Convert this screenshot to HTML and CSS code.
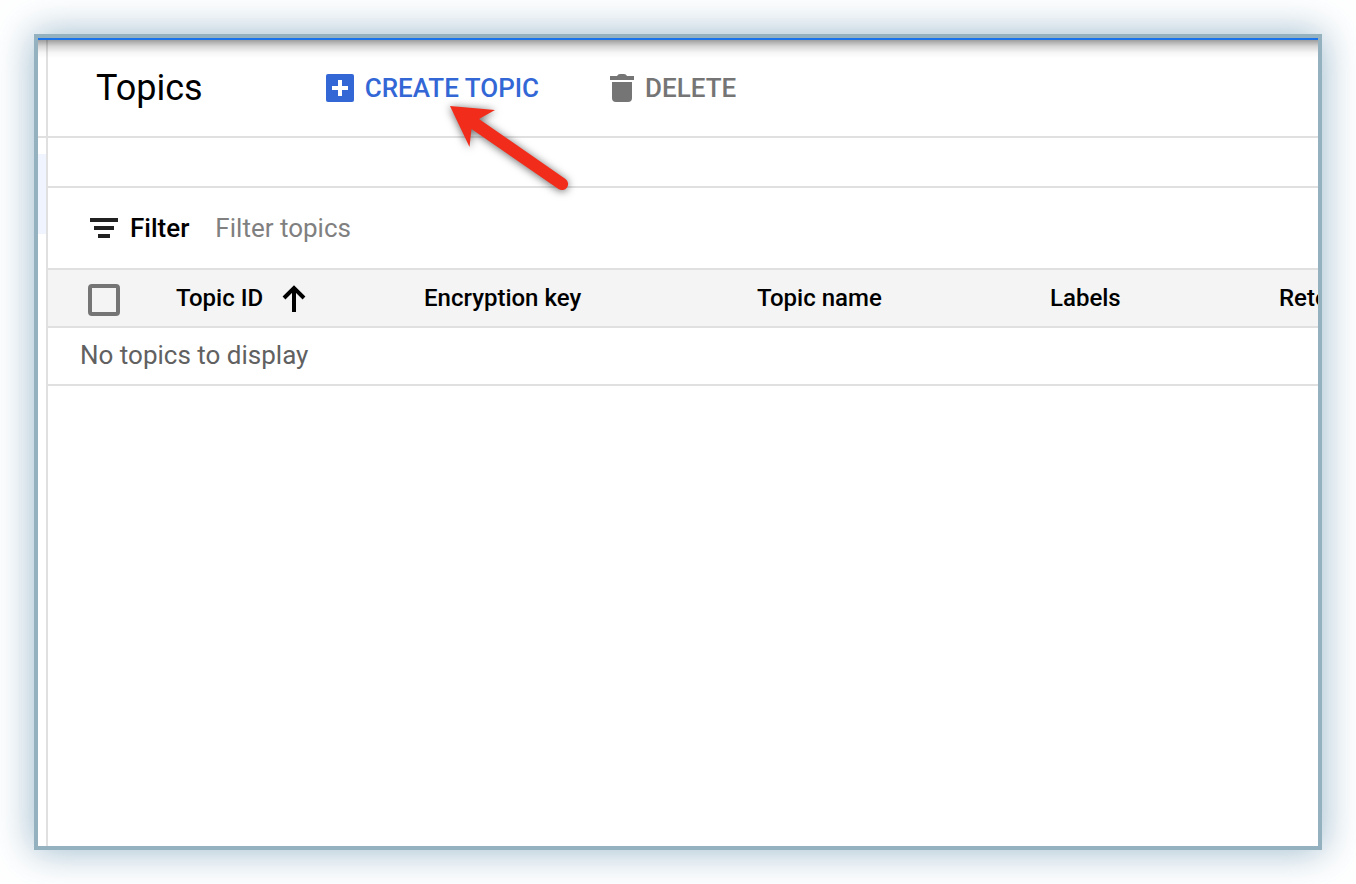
FILE: index.html
```
<!DOCTYPE html>
<html lang="en">
<head>
  <meta charset="UTF-8">
  <meta name="viewport" content="width=device-width, initial-scale=1.0">
  <title>Topics</title>
  <link rel="stylesheet" href="styles.css">
</head>
<body>
  <div class="window">
    <aside class="sidebar">
      <div class="sidebar-header"></div>
      <div class="sidebar-active"></div>
    </aside>

    <main class="content">
      <header class="toolbar">
        <h1>Topics</h1>
        <div class="actions">
          <button type="button" class="action create">
            <svg width="28" height="28" viewBox="0 0 28 28" aria-hidden="true">
              <rect width="28" height="28" rx="2" fill="currentColor"/>
              <path d="M12 6h4v6h6v4h-6v6h-4v-6H6v-4h6z" fill="#fff"/>
            </svg>
            CREATE TOPIC
          </button>
          <button type="button" class="action" disabled>
            <svg width="24" height="28" viewBox="0 0 24 28" aria-hidden="true">
              <path d="M0 2h7q1-2 3-2h4q2 0 3 2h7v4H0zM2 8h20v16a4 4 0 0 1-4 4H6a4 4 0 0 1-4-4z" fill="currentColor"/>
            </svg>
            DELETE
          </button>
        </div>

        <!-- Pointer to the create button -->
        <svg class="arrow" width="140" height="110" viewBox="0 0 140 110" aria-hidden="true">
          <path d="M10 10L55 14L39 23L125.500 83A6 6 0 0 1 118.500 93L31.500 33L29.500 51Z" fill="#f22c1b"/>
        </svg>
      </header>

      <div class="spacer"></div>

      <div class="filter">
        <label for="filterInput">
          <svg width="28" height="20" viewBox="0 0 28 20" aria-hidden="true">
            <path d="M0 0h28v4H0zM4 8h20v4H4zM8 16h12v4H8z" fill="#212121"/>
          </svg>
          Filter
        </label>
        <input type="text" id="filterInput" placeholder="Filter topics">
      </div>

      <div class="table-wrap">
        <table>
          <thead>
            <tr>
              <th class="col-check"><input type="checkbox" aria-label="Select all topics"></th>
              <th class="col-id">
                <button type="button" class="sort">
                  Topic ID
                  <svg width="24" height="28" viewBox="0 0 24 28" aria-hidden="true">
                    <path d="M12 28V4M2 14L12 4l10 10" fill="none" stroke="currentColor" stroke-width="4"/>
                  </svg>
                </button>
              </th>
              <th class="col-key">Encryption key</th>
              <th class="col-name">Topic name</th>
              <th class="col-labels">Labels</th>
              <th class="col-retention">Retention</th>
            </tr>
          </thead>
          <tbody>
            <tr>
              <td colspan="6">No topics to display</td>
            </tr>
          </tbody>
        </table>
      </div>
    </main>
  </div>
</body>
</html>
```
FILE: styles.css
```
* {
  margin: 0;
  padding: 0;
  box-sizing: border-box;
  font-family: Roboto, 'Liberation Sans', sans-serif;
}

body {
  min-height: 100vh;
  padding: 34px;
  display: flex;
  background-color: #fff;
  color: #000;
}

.window {
  position: relative;
  flex: 1;
  min-width: 0;
  display: flex;
  overflow: hidden;
  background-color: #fff;
  border: 4px solid #93b1bf;
  box-shadow: 0 0 36px 2px rgba(120, 160, 185, 0.7);
}

/* Blue line and the shadow of the bar above */
.window::before {
  content: '';
  position: absolute;
  top: 0;
  left: 0;
  right: 0;
  height: 18px;
  border-top: 2px solid #1a73e8;
  background: linear-gradient(rgba(0, 0, 0, 0.38), rgba(0, 0, 0, 0.16) 35%, rgba(0, 0, 0, 0.04) 70%, transparent);
  pointer-events: none;
}

.sidebar {
  width: 10px;
  flex-shrink: 0;
  border-right: 2px solid #e0e0e0;
}

.sidebar-header {
  height: 100px;
  border-bottom: 2px solid #e0e0e0;
}

.sidebar-active {
  height: 80px;
  margin-top: 16px;
  background-color: #f0f4ff;
}

.content {
  flex: 1;
  min-width: 0;
}

.toolbar {
  position: relative;
  display: flex;
  align-items: center;
  gap: 123px;
  height: 100px;
  padding-top: 2px;
  padding-left: 48px;
  border-bottom: 2px solid #e0e0e0;
}

h1 {
  font-size: 36px;
  font-weight: 400;
  line-height: 42px;
}

.actions {
  display: flex;
  gap: 71px;
}

.action {
  display: flex;
  align-items: center;
  gap: 11px;
  border: none;
  background: none;
  color: #757575;
  font-size: 26px;
  font-weight: 500;
  line-height: 32px;
}

.create {
  color: #3367d6;
  cursor: pointer;
}

.arrow {
  position: absolute;
  top: 58px;
  left: 392px;
  filter: drop-shadow(0 1px 4px rgba(0, 0, 0, 0.6));
  pointer-events: none;
}

.spacer {
  height: 50px;
  border-bottom: 2px solid #e0e0e0;
}

.filter {
  display: flex;
  align-items: center;
  gap: 26px;
  height: 80px;
  padding-left: 42px;
}

.filter label {
  display: flex;
  align-items: center;
  gap: 12px;
  font-size: 26px;
  font-weight: 500;
}

.filter input {
  flex: 1;
  min-width: 0;
  height: 40px;
  border: none;
  outline: none;
  font-size: 26px;
}

.filter input::placeholder {
  color: #808080;
}

.table-wrap {
  overflow: hidden;
}

table {
  width: 1447px;
  min-width: 100%;
  table-layout: fixed;
  border-collapse: separate;
  border-spacing: 0;
  text-align: left;
}

th {
  height: 60px;
  padding-left: 32px;
  background-color: #f4f4f4;
  border-top: 2px solid #e0e0e0;
  border-bottom: 2px solid #e0e0e0;
  font-size: 24px;
  font-weight: 500;
  white-space: nowrap;
}

.col-check { width: 96px; padding-top: 4px; padding-left: 40px; }
.col-id { width: 248px; }
.col-key { width: 333px; }
.col-name { width: 293px; }
.col-labels { width: 229px; }
.col-retention { width: 248px; }

th input {
  display: block;
  width: 32px;
  height: 32px;
  appearance: none;
  border: 4px solid #757575;
  border-radius: 4px;
}

.sort {
  display: flex;
  align-items: center;
  gap: 19px;
  border: none;
  background: none;
  color: #000;
  font-size: 24px;
  font-weight: 500;
  cursor: pointer;
}

td {
  height: 58px;
  padding-bottom: 2px;
  padding-left: 32px;
  border-bottom: 2px solid #e0e0e0;
  color: #616161;
  font-size: 26px;
}
```
